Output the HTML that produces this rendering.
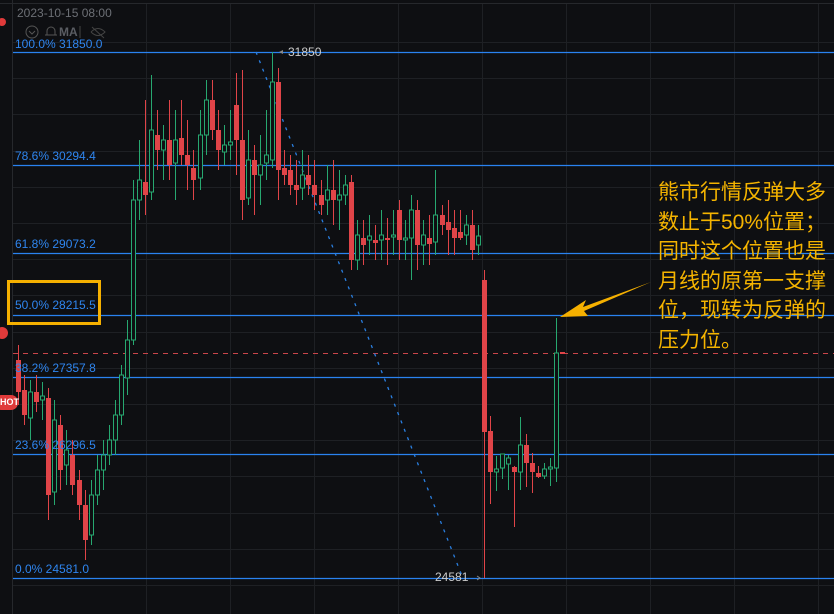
<!DOCTYPE html>
<html><head><meta charset="utf-8"><style>
html,body{margin:0;padding:0;background:#0e0f12;width:834px;height:614px;overflow:hidden}
.t{position:absolute;font-family:"Liberation Sans","Noto Sans CJK SC",sans-serif}
.fib{color:#2f86f0;font-size:12px;left:15px}
</style></head><body>
<svg id="s" width="834" height="614" style="position:absolute;left:0;top:0" xmlns="http://www.w3.org/2000/svg">
<g id="grid" stroke="#1e2024" stroke-width="1"></g>
<line x1="12.5" y1="0" x2="12.5" y2="614" stroke="#26282c"/>
<line x1="0" y1="3.5" x2="834" y2="3.5" stroke="#26282c"/>
<g stroke="#2a82f0" stroke-width="1.2">
<line x1="13" y1="52.5" x2="834" y2="52.5"/>
<line x1="13" y1="165.5" x2="834" y2="165.5"/>
<line x1="13" y1="253.5" x2="834" y2="253.5"/>
<line x1="13" y1="315.5" x2="834" y2="315.5"/>
<line x1="13" y1="377.5" x2="834" y2="377.5"/>
<line x1="13" y1="454.5" x2="834" y2="454.5"/>
<line x1="13" y1="578.5" x2="834" y2="578.5"/>
</g>
<line x1="13" y1="353.5" x2="834" y2="353.5" stroke="#c9454a" stroke-dasharray="5,5"/>
<line x1="256" y1="52" x2="462" y2="576" stroke="#2a7fe0" stroke-dasharray="3,6" stroke-width="1.3"/>
<g id="c"></g>
<polygon points="560,317 586,300 583,307 651,282 584,311 588,316" fill="#f5b000"/>
<rect x="8.5" y="281.5" width="91" height="42" fill="none" stroke="#f5b000" stroke-width="3"/>
<circle cx="2" cy="22" r="4" fill="#e03a3a"/><circle cx="2" cy="333" r="6" fill="#e03a3a"/>
<rect x="-6" y="395" width="24" height="15" rx="7" fill="#e03a3a"/>
<circle cx="32" cy="32" r="6" fill="none" stroke="#555"/>
<path d="M29 31l3 3 3-3" fill="none" stroke="#555"/>
<path d="M47 35v-4a4 4 0 0 1 8 0v4h2H45" fill="none" stroke="#555"/>
<line x1="80" y1="26" x2="80" y2="38" stroke="#444"/>
<path d="M91 32q7-7 14 0q-7 7-14 0M92 27l12 11" fill="none" stroke="#444"/>
<path d="M279 52l4-2v4z" fill="#888"/>
<path d="M477 576l3 2-3 2" fill="none" stroke="#888"/>
</svg>
<div class="t" style="left:17px;top:6px;font-size:12px;color:#6c6f75">2023-10-15 08:00</div>
<div class="t" style="left:59px;top:25px;font-size:12px;color:#5a5d63;font-weight:bold">MA</div>
<div class="t" style="left:0;top:397px;font-size:9px;color:#fff;font-weight:bold">HOT</div>
<div class="t fib" style="top:37px">100.0% 31850.0</div>
<div class="t fib" style="top:149px">78.6% 30294.4</div>
<div class="t fib" style="top:237px">61.8% 29073.2</div>
<div class="t fib" style="top:298px">50.0% 28215.5</div>
<div class="t fib" style="top:361px">38.2% 27357.8</div>
<div class="t fib" style="top:438px">23.6% 26296.5</div>
<div class="t fib" style="top:562px">0.0% 24581.0</div>
<div class="t" style="left:288px;top:45px;font-size:12px;color:#ccc">31850</div>
<div class="t" style="left:435px;top:570px;font-size:12px;color:#ccc">24581</div>
<div class="t" style="left:658px;top:178px;font-size:21px;line-height:29.5px;color:#f5b400;width:180px">熊市行情反弹大多<br>数止于50%位置；<br>同时这个位置也是<br>月线的原第一支撑<br>位，现转为反弹的<br>压力位。</div>
<script>
var ns="http://www.w3.org/2000/svg",g=document.getElementById("grid"),c=document.getElementById("c");
function el(p,t,a){var e=document.createElementNS(ns,t);for(var k in a)e.setAttribute(k,a[k]);p.appendChild(e);return e}
for(var x=146;x<834;x+=84)el(g,"line",{x1:x+.5,y1:4,x2:x+.5,y2:614});
for(var y=42;y<614;y+=36.2)el(g,"line",{x1:13,y1:Math.round(y)+.5,x2:834,y2:Math.round(y)+.5});
var d=[[360,392,345,405],[390,415,375,425],[418,392,380,440],[392,402,375,412],[400,396,382,420],[398,495,388,520],[492,420,400,505],[425,470,415,490],[465,450,430,485],[455,485,440,495],[480,505,470,520],[505,540,490,560],[535,495,480,545],[495,470,455,505],[470,455,440,490],[455,440,425,465],[440,415,400,455],[415,375,365,425],[378,340,320,395],[340,200,180,345],[200,180,140,220],[182,195,100,215],[192,130,75,200],[135,150,110,170],[150,140,125,180],[140,165,100,180],[163,140,110,200],[138,155,100,165],[155,165,120,190],[168,180,150,200],[178,135,110,190],[135,100,80,155],[100,130,80,140],[130,150,110,170],[152,145,125,165],[145,142,110,160],[105,140,73,175],[140,200,70,220],[198,160,130,205],[160,175,145,215],[175,165,135,205],[163,155,110,180],[160,82,52,168],[82,170,68,200],[168,175,150,185],[170,185,155,195],[185,190,160,205],[188,175,150,200],[175,185,155,195],[185,195,160,210],[195,205,180,215],[200,190,165,215],[190,200,160,225],[200,195,170,230],[195,185,175,205],[182,260,175,270],[260,235,220,270],[238,245,220,265],[240,236,215,255],[240,243,225,260],[240,235,210,260],[238,240,218,265],[237,235,210,255],[210,240,200,260],[240,238,220,260],[238,210,195,280],[210,245,200,270],[245,235,220,265],[238,244,215,265],[242,215,170,255],[215,225,205,235],[222,230,200,255],[228,238,210,255],[232,238,210,240],[235,225,215,245],[225,250,210,260],[245,236,225,255],[280,432,270,578],[431,472,416,504],[472,469,456,491],[468,454,454,479],[464,458,455,490],[467,472,466,527],[472,445,417,490],[445,463,434,487],[463,472,453,493],[473,477,466,478],[476,469,463,479],[469,467,458,486],[468,353,318,482]];
d.forEach(function(v,i){var x=Math.round(16+i*6.05),up=v[1]<v[0],col=up?"#27a870":"#e04448";
el(c,"line",{x1:x+2.5,y1:v[2],x2:x+2.5,y2:v[3],stroke:col});
var t=Math.min(v[0],v[1]),h=Math.max(Math.abs(v[0]-v[1]),1.5);
if(up)el(c,"rect",{x:x+.5,y:t,width:4,height:h,fill:"#0e0f12",stroke:col});else el(c,"rect",{x:x,y:t,width:5,height:h,fill:col});});
el(c,"rect",{x:560,y:352,width:5,height:2,fill:"#e04448"});
</script>
</body></html>
